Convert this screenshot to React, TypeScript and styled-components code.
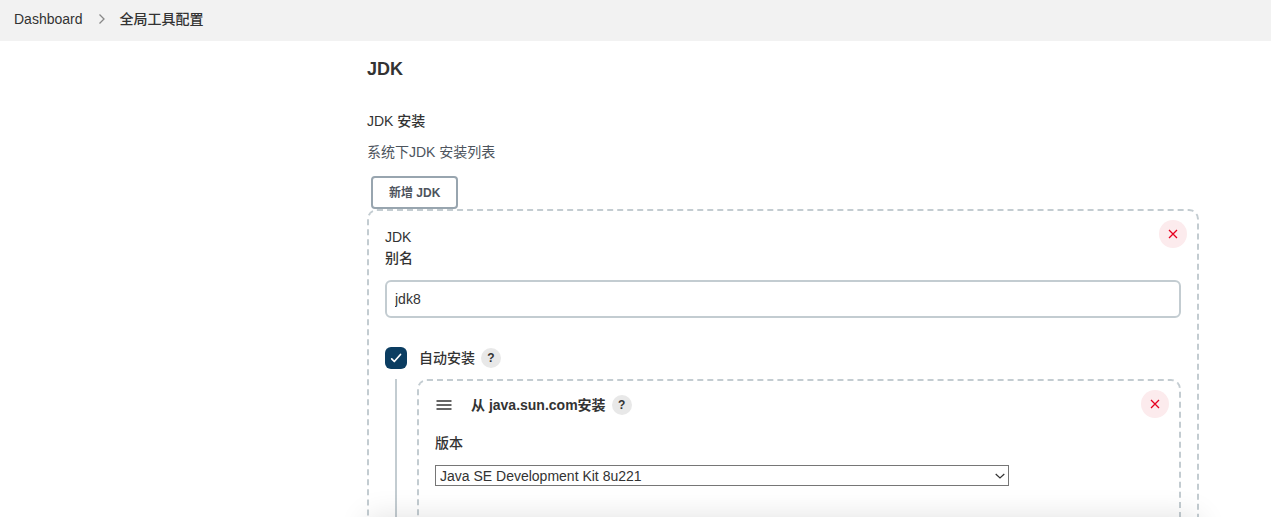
import React from "react";
import styled, { createGlobalStyle, css } from "styled-components";

const GlobalStyle = createGlobalStyle`
  *, *::before, *::after { box-sizing: border-box; }
  body {
    margin: 0;
    background: #fff;
    color: #333;
    font: 400 14px/20px "Liberation Sans", "Noto Sans CJK SC", sans-serif;
  }
  button, input, select { font: inherit; color: inherit; }
`;

const Page = styled.div`
  position: relative;
  display: flex;
  flex-direction: column;
  height: 100vh;
  overflow: hidden;
`;

const Breadcrumbs = styled.nav`
  display: flex;
  flex: none;
  align-items: center;
  gap: 14px;
  height: 41px;
  padding: 0 14px 3px;
  background: #f2f2f2;
  font-weight: 500;
`;

const Crumb = styled.a`
  color: #333;
  text-decoration: none;
`;

const Content = styled.main`
  flex: 1;
  min-height: 0;
  padding: 16px 72px 0 367px;
`;

const Title = styled.h1`
  margin: 0 0 30px;
  font-size: 18px;
  line-height: 24px;
  font-weight: 700;
`;

const SectionTitle = styled.h2`
  margin: 0 0 11px;
  font-size: 14px;
  line-height: 20px;
  font-weight: 500;
`;

const Description = styled.p`
  margin: 0 0 14px;
  color: #4d545d;
`;

const AddButton = styled.button`
  display: block;
  height: 33px;
  margin-left: 4px;
  padding: 0 16px;
  border: 2px solid #98a5af;
  border-radius: 4px;
  background: #fff;
  color: #4d545d;
  font-size: 12px;
  line-height: 16px;
  font-weight: 700;
`;

const Panel = styled.section`
  position: relative;
  flex: 1;
  min-width: 0;
  padding: 16px 16px 80px;
  border: 2px dashed #c3ccd1;
  border-radius: 10px;
`;

const RemoveButton = styled.button`
  position: absolute;
  top: 9px;
  right: 10px;
  display: flex;
  align-items: center;
  justify-content: center;
  width: 28px;
  height: 28px;
  padding: 0;
  border: 0;
  border-radius: 50%;
  background: #fcebed;
  color: #e6001f;
`;

const ItemName = styled.div`
  margin-bottom: 1px;
`;

const FieldLabel = styled.label`
  display: block;
  margin-bottom: 12px;
  font-weight: 500;
`;

const TextInput = styled.input`
  display: block;
  width: 100%;
  height: 38px;
  padding: 0 8px;
  border: 2px solid #c3ccd1;
  border-radius: 6px;
  background: #fff;
  outline: none;
`;

const ToggleRow = styled.div`
  display: flex;
  align-items: center;
  height: 22px;
  margin: 29px 0 10px;
`;

const CheckWrap = styled.span`
  display: grid;
  width: 22px;
  height: 22px;
  margin-right: 12px;

  > * { grid-area: 1 / 1; }
  > svg { pointer-events: none; }
`;

const CheckInput = styled.input`
  appearance: none;
  width: 22px;
  height: 22px;
  margin: 0;
  border-radius: 6px;
  background: #0b3d61;
`;

const emphasis = css`
  font-weight: 500;
`;

const ToggleLabel = styled.label`
  ${emphasis}
`;

const HelpButton = styled.button`
  display: flex;
  align-items: center;
  justify-content: center;
  width: 20px;
  height: 20px;
  margin-left: 6px;
  padding: 0;
  border: 0;
  border-radius: 50%;
  background: #e8e8e8;
  font-size: 12px;
  line-height: 16px;
  font-weight: 700;
`;

const Nested = styled.div`
  display: flex;
  gap: 20px;
  padding-left: 10px;
`;

const Guide = styled.div`
  flex: none;
  width: 2px;
  background: #c3ccd1;
`;

const InstallerHeader = styled.header`
  display: flex;
  align-items: center;
  height: 20px;
  margin: -2px 0 18px;
`;

const DragHandle = styled.svg`
  flex: none;
  width: 18px;
  height: 18px;
  margin-right: 18px;
`;

const InstallerName = styled.strong`
  font-size: 14px;
  font-weight: 700;
`;

const VersionSelect = styled.div`
  position: relative;
  display: flex;
  align-items: center;
  justify-content: flex-end;
  width: 574px;
  max-width: 100%;

  > svg {
    position: absolute;
    right: 3px;
    pointer-events: none;
  }
`;

const Select = styled.select`
  appearance: none;
  width: 100%;
  height: 21px;
  padding: 0 4px;
  border: 1px solid #767676;
  border-radius: 0;
  background: #fff;
  line-height: 18px;
`;

const BottomShade = styled.div`
  position: absolute;
  top: 100%;
  left: 367px;
  right: 72px;
  height: 60px;
  box-shadow: 0 0 30px 0 rgba(0, 0, 0, 0.12);
  pointer-events: none;
`;

const Separator = () => (
  <svg width="9" height="10" viewBox="0 0 9 10" fill="none" stroke="#888" strokeWidth="1.3" aria-hidden="true">
    <path d="M2.5 .5 7 5 2.5 9.5" />
  </svg>
);

const Cross = () => (
  <svg width="10" height="10" viewBox="0 0 10 10" fill="none" stroke="currentColor" strokeWidth="1.3" aria-hidden="true">
    <path d="M1 1l8 8M9 1L1 9" />
  </svg>
);

const Tick = () => (
  <svg width="22" height="22" viewBox="0 0 22 22" fill="none" stroke="#fff" strokeWidth="1.7" strokeLinecap="round" strokeLinejoin="round" aria-hidden="true">
    <path d="M6.7 11.8l2.6 2.7 6.2-7" />
  </svg>
);

const Caret = () => (
  <svg width="12" height="8" viewBox="0 0 12 8" fill="none" stroke="#333" strokeWidth="1.2" aria-hidden="true">
    <path d="M1.7 2l4.3 4 4.3-4" />
  </svg>
);

export default function App() {
  return (
    <Page>
      <GlobalStyle />
      <Breadcrumbs>
        <Crumb href="#dashboard">Dashboard</Crumb>
        <Separator />
        <Crumb href="#tools">全局工具配置</Crumb>
      </Breadcrumbs>
      <Content>
        <Title>JDK</Title>
        <SectionTitle>JDK 安装</SectionTitle>
        <Description>系统下JDK 安装列表</Description>
        <AddButton type="button">新增 JDK</AddButton>
        <Panel>
          <RemoveButton type="button">
            <Cross />
          </RemoveButton>
          <ItemName>JDK</ItemName>
          <FieldLabel htmlFor="jdk-name">别名</FieldLabel>
          <TextInput id="jdk-name" type="text" defaultValue="jdk8" />
          <ToggleRow>
            <CheckWrap>
              <CheckInput id="auto-install" type="checkbox" defaultChecked />
              <Tick />
            </CheckWrap>
            <ToggleLabel htmlFor="auto-install">自动安装</ToggleLabel>
            <HelpButton type="button">?</HelpButton>
          </ToggleRow>
          <Nested>
            <Guide />
            <Panel>
              <RemoveButton type="button">
                <Cross />
              </RemoveButton>
              <InstallerHeader>
                <DragHandle viewBox="0 0 18 18" stroke="#333" strokeWidth="1.4" aria-hidden="true">
                  <path d="M1.5 5h15M1.5 9h15M1.5 13h15" />
                </DragHandle>
                <InstallerName>从 java.sun.com安装</InstallerName>
                <HelpButton type="button">?</HelpButton>
              </InstallerHeader>
              <FieldLabel htmlFor="jdk-version">版本</FieldLabel>
              <VersionSelect>
                <Select id="jdk-version" defaultValue="8u221">
                  <option value="8u221">Java SE Development Kit 8u221</option>
                </Select>
                <Caret />
              </VersionSelect>
            </Panel>
          </Nested>
        </Panel>
      </Content>
      <BottomShade />
    </Page>
  );
}
